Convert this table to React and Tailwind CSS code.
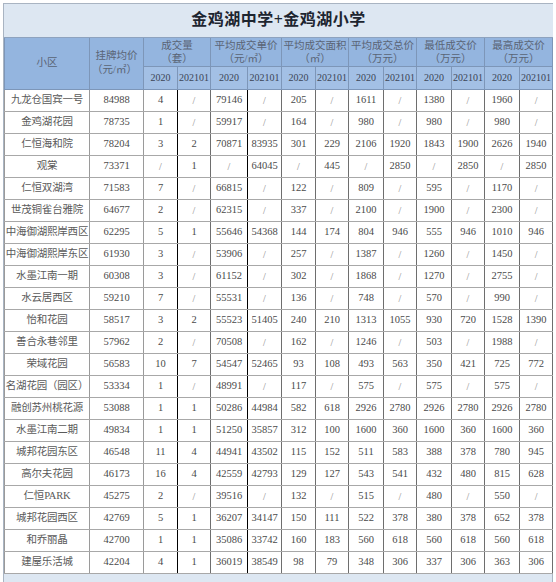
import React from "react";

const rows = [
  ["九龙仓国宾一号","84988","4","/","79146","/","205","/","1611","/","1380","/","1960","/"],
  ["金鸡湖花园","78735","1","/","59917","/","164","/","980","/","980","/","980","/"],
  ["仁恒海和院","78204","3","2","70871","83935","301","229","2106","1920","1843","1900","2626","1940"],
  ["观棠","73371","/","1","/","64045","/","445","/","2850","/","2850","/","2850"],
  ["仁恒双湖湾","71583","7","/","66815","/","122","/","809","/","595","/","1170","/"],
  ["世茂铜雀台雅院","64677","2","/","62315","/","337","/","2100","/","1900","/","2300","/"],
  ["中海御湖熙岸西区","62295","5","1","55646","54368","144","174","804","946","555","946","1010","946"],
  ["中海御湖熙岸东区","61930","3","/","53906","/","257","/","1387","/","1260","/","1450","/"],
  ["水墨江南一期","60308","3","/","61152","/","302","/","1868","/","1270","/","2755","/"],
  ["水云居西区","59210","7","/","55531","/","136","/","748","/","570","/","990","/"],
  ["怡和花园","58517","3","2","55523","51405","240","210","1313","1055","930","720","1528","1390"],
  ["善合永巷邻里","57962","2","/","70508","/","162","/","1246","/","503","/","1988","/"],
  ["荣域花园","56583","10","7","54547","52465","93","108","493","563","350","421","725","772"],
  ["名湖花园（园区）","53334","1","/","48991","/","117","/","575","/","575","/","575","/"],
  ["融创苏州桃花源","53088","1","1","50286","44984","582","618","2926","2780","2926","2780","2926","2780"],
  ["水墨江南二期","49834","1","1","51250","35857","312","100","1600","360","1600","360","1600","360"],
  ["城邦花园东区","46548","11","4","44941","43502","115","152","511","583","388","378","780","945"],
  ["高尔夫花园","46173","16","4","42559","42793","129","127","543","541","432","480","815","628"],
  ["仁恒PARK","45275","2","/","39516","/","132","/","515","/","480","/","550","/"],
  ["城邦花园西区","42769","5","1","36207","34147","150","111","522","378","380","378","652","378"],
  ["和乔丽晶","42700","1","1","35086","33742","160","183","560","618","560","618","560","618"],
  ["建屋乐活城","42204","4","1","36019","38549","98","79","348","306","337","306","363","306"],
];

const widths = [85, 54, 34, 33, 37, 34, 34, 33, 35, 33, 35, 33, 35, 33];

const groups = [
  ["成交量", "（套）"],
  ["平均成交单价", "（元/㎡）"],
  ["平均成交面积", "（㎡）"],
  ["平均成交总价", "（万元）"],
  ["最低成交价", "（万元）"],
  ["最高成交价", "（万元）"],
];

const font = { fontFamily: '"Liberation Serif", "Noto Sans CJK SC", serif' };

export default function App() {
  return (
    <div className="w-[556px] h-[582px] bg-white pt-[3px] pl-[3px] overflow-hidden" style={font}>
      <div className="w-[550px] h-[582px] bg-[#dde7f2] border-l border-t border-r border-[#a9b4c2]">
        <table className="border-collapse table-fixed w-[548px]">
          <colgroup>
            {widths.map((w, i) => (
              <col key={i} style={{ width: w }} />
            ))}
          </colgroup>
          <tbody>
            <tr className="h-[33px]">
              <td colSpan={14} className="text-center text-[16px] font-bold text-[#1d2530] bg-[#dde7f2] border-b border-[#8ea3bf] tracking-[0.5px]">
                金鸡湖中学+金鸡湖小学
              </td>
            </tr>
            <tr className="h-[29px] bg-[#94b5df]">
              <td rowSpan={2} className="text-center text-[10.5px] text-[#5a6475] border border-[#7d96b8]">
                小区
              </td>
              <td rowSpan={2} className="text-center text-[10.5px] leading-[14px] text-[#5a6475] border border-[#7d96b8]">
                <div>挂牌均价</div>
                <div className="-ml-1">（元/㎡）</div>
              </td>
              {groups.map((g, i) => (
                <td key={i} colSpan={2} className="text-center text-[10.5px] leading-[13px] text-[#5a6475] border border-[#7d96b8] whitespace-nowrap overflow-visible">
                  <div>{g[0]}</div>
                  <div>{g[1]}</div>
                </td>
              ))}
            </tr>
            <tr className="h-[23px] bg-[#a3c0e5]">
              {groups.map((g, i) => (
                <React.Fragment key={i}>
                  <td className="text-center text-[10px] text-[#3c4555] border border-[#7d96b8]">2020</td>
                  <td className="text-center text-[10px] text-[#3c4555] border border-[#7d96b8]">202101</td>
                </React.Fragment>
              ))}
            </tr>
            {rows.map((r, ri) => (
              <tr key={ri} className="h-[22px] bg-white">
                {r.map((c, ci) => {
                  const isName = ci === 0;
                  const black = ci === 2 || ci === 4;
                  const dark = ci >= 3;
                  return (
                    <td
                      key={ci}
                      className={
                        "text-center whitespace-nowrap border-b border-b-[#a8a8a8] border-l border-l-[#9a9a9a] border-r " +
                        (black ? "border-r-black " : dark ? "border-r-[#6e6e6e] " : "border-r-[#9a9a9a] ") +
                        (isName ? "text-[10.5px] tracking-[-0.2px] text-[#5a5a5a]" : c === "/" ? "text-[10px] text-[#888]" : "text-[10.5px] text-[#4a4a4a]")
                      }
                    >
                      {c}
                    </td>
                  );
                })}
              </tr>
            ))}
          </tbody>
        </table>
      </div>
    </div>
  );
}
